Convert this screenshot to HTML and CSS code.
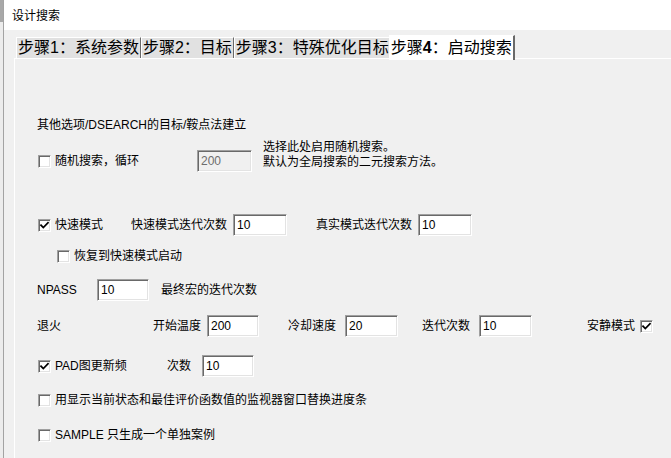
FILE: index.html
```html
<!DOCTYPE html>
<html lang="zh-CN">
<head>
<meta charset="utf-8">
<title>设计搜索</title>
<link rel="stylesheet" href="styles.css">
</head>
<body>
<div class="screen">
  <div class="edge"><div class="edge-top"></div></div>
  <div class="window">
    <div class="titlebar">设计搜索</div>
    <div class="tabs">
      <div class="tab">步骤1：系统参数</div>
      <div class="tab">步骤2：目标</div>
      <div class="tab">步骤3：特殊优化目标</div>
      <div class="tab active">步骤<b>4</b>：启动搜索</div>
    </div>
    <div class="panel">
      <div class="row heading">其他选项/DSEARCH的目标/鞍点法建立</div>

      <div class="row r-random">
        <div class="check cell-random"><span class="cb"></span><span class="lbl">随机搜索，循环</span></div>
        <input class="field disabled w55" type="text" value="200" disabled>
        <div class="desc">选择此处启用随机搜索。<br>默认为全局搜索的二元搜索方法。</div>
      </div>

      <div class="row r-fast">
        <div class="check cell-fast"><span class="cb checked"><svg viewBox="0 0 13 13"><path d="M3 6.2 L5.3 8.6 L10 3.8"/></svg></span><span class="lbl">快速模式</span></div>
        <span class="lbl">快速模式迭代次数</span>
        <input class="field w54 gap6" type="text" value="10">
        <span class="lbl gap29">真实模式迭代次数</span>
        <input class="field w54 gap6" type="text" value="10">
      </div>

      <div class="row r-restore">
        <div class="check"><span class="cb"></span><span class="lbl">恢复到快速模式启动</span></div>
      </div>

      <div class="row r-npass">
        <span class="lbl cell-npass">NPASS</span>
        <input class="field w52" type="text" value="10">
        <span class="lbl gap12">最终宏的迭代次数</span>
      </div>

      <div class="row r-anneal">
        <span class="lbl cell-anneal">退火</span>
        <span class="lbl">开始温度</span>
        <input class="field w52 gap6" type="text" value="200">
        <span class="lbl gap29">冷却速度</span>
        <input class="field w53 gap9" type="text" value="20">
        <span class="lbl gap24">迭代次数</span>
        <input class="field w53 gap9" type="text" value="10">
        <span class="lbl gap55">安静模式</span>
        <span class="cb checked gap5"><svg viewBox="0 0 13 13"><path d="M3 6.2 L5.3 8.6 L10 3.8"/></svg></span>
      </div>

      <div class="row r-pad">
        <div class="check cell-pad"><span class="cb checked"><svg viewBox="0 0 13 13"><path d="M3 6.2 L5.3 8.6 L10 3.8"/></svg></span><span class="lbl">PAD图更新频</span></div>
        <span class="lbl">次数</span>
        <input class="field w52 gap11" type="text" value="10">
      </div>

      <div class="row r-monitor">
        <div class="check"><span class="cb"></span><span class="lbl">用显示当前状态和最佳评价函数值的监视器窗口替换进度条</span></div>
      </div>

      <div class="row r-sample">
        <div class="check"><span class="cb"></span><span class="lbl">SAMPLE 只生成一个单独案例</span></div>
      </div>
    </div>
  </div>
</div>
</body>
</html>
```

FILE: styles.css
```css
html, body {
  margin: 0;
  padding: 0;
  background: #f0f0f0;
}

body {
  font-family: "Liberation Sans", "Noto Sans CJK SC", sans-serif;
  font-size: 12px;
  color: #000;
}

.screen {
  display: flex;
  width: 671px;
  height: 458px;
  overflow: hidden;
  background: #f0f0f0;
}

.edge {
  flex: none;
  width: 3px;
  background: #ececec;
  border-right: 1px solid #a3a3a3;
  display: flex;
  flex-direction: column;
}

.edge-top {
  height: 22px;
  background: #a8a8a8;
}

.window {
  flex: 1;
  display: flex;
  flex-direction: column;
  background: #f0f0f0;
  min-width: 0;
}

.titlebar {
  flex: none;
  height: 30px;
  line-height: 32px;
  padding-left: 8px;
  background: #fff;
  font-size: 12px;
}

.tabs {
  flex: none;
  height: 28px;
  display: flex;
  align-items: flex-end;
  margin-left: 12px;
  position: relative;
  z-index: 1;
}

.tab {
  box-sizing: border-box;
  height: 21px;
  line-height: 20px;
  font-size: 16px;
  padding: 0 1px;
  background: #e1e1e1;
  border-top: 1px solid #fff;
  border-left: 1px solid #fff;
  border-right: 1px solid #696969;
  white-space: nowrap;
}

.tab.active {
  height: 25px;
  line-height: 24px;
  margin-bottom: -2px;
  margin-left: -2px;
  background: #fff;
  border-right: 2px solid #696969;
}

.tab b {
  font-weight: bold;
}

.panel {
  flex: 1;
  margin-left: 10px;
  border-top: 1px solid #fff;
  border-left: 1px solid #fff;
  padding: 58px 0 0 22px;
  display: flex;
  flex-direction: column;
}

.row {
  display: flex;
  align-items: center;
  white-space: nowrap;
  flex: none;
}

.heading { height: 16px; line-height: 16px; }
.r-random { margin-top: 17px; height: 22px; }
.r-fast { margin-top: 42px; height: 22px; }
.r-restore { margin-top: 12px; height: 16px; padding-left: 19px; }
.r-npass { margin-top: 15px; height: 22px; }
.r-anneal { margin-top: 14px; height: 22px; }
.r-pad { margin-top: 18px; height: 22px; }
.r-monitor { margin-top: 15px; height: 16px; }
.r-sample { margin-top: 19px; height: 16px; }

.check {
  display: flex;
  align-items: center;
}

.check .cb {
  margin-left: 1px;
}

.check .lbl {
  margin-left: 4px;
}

.lbl {
  line-height: 16px;
  flex: none;
}

.cell-random { width: 160px; flex: none; }
.cell-fast { width: 94px; flex: none; }
.cell-npass { width: 60px; }
.cell-anneal { width: 116px; }
.cell-pad { width: 130px; flex: none; }

.cb {
  box-sizing: border-box;
  flex: none;
  width: 13px;
  height: 13px;
  background: #fff;
  border: 1px solid;
  border-color: #a0a0a0 #fff #fff #a0a0a0;
  box-shadow: inset 1px 1px 0 #696969, inset -1px -1px 0 #e3e3e3;
  display: flex;
  align-items: center;
  justify-content: center;
}

.cb svg {
  width: 13px;
  height: 13px;
  flex: none;
  margin: -1px;
}

.cb svg path {
  fill: none;
  stroke: #000;
  stroke-width: 1.7;
  stroke-linecap: square;
}

.field {
  box-sizing: border-box;
  flex: none;
  height: 22px;
  margin: 0;
  padding: 0 0 0 3px;
  border: 1px solid;
  border-color: #a0a0a0 #fff #fff #a0a0a0;
  box-shadow: inset 1px 1px 0 #696969, inset -1px -1px 0 #e3e3e3;
  background: #fff;
  font-family: "Liberation Sans", "Noto Sans CJK SC", sans-serif;
  font-size: 12px;
  color: #000;
  outline: none;
}

.field.disabled {
  background: #f0f0f0;
  color: #6d6d6d;
}

.w52 { width: 52px; }
.w53 { width: 53px; }
.w54 { width: 54px; }
.w55 { width: 55px; }

.gap5 { margin-left: 5px; }
.gap6 { margin-left: 6px; }
.gap9 { margin-left: 9px; }
.gap11 { margin-left: 11px; }
.gap12 { margin-left: 12px; }
.gap24 { margin-left: 24px; }
.gap29 { margin-left: 29px; }
.gap55 { margin-left: 55px; }

.desc {
  align-self: flex-end;
  margin-left: 11px;
  margin-bottom: 2px;
  line-height: 15px;
}
```
